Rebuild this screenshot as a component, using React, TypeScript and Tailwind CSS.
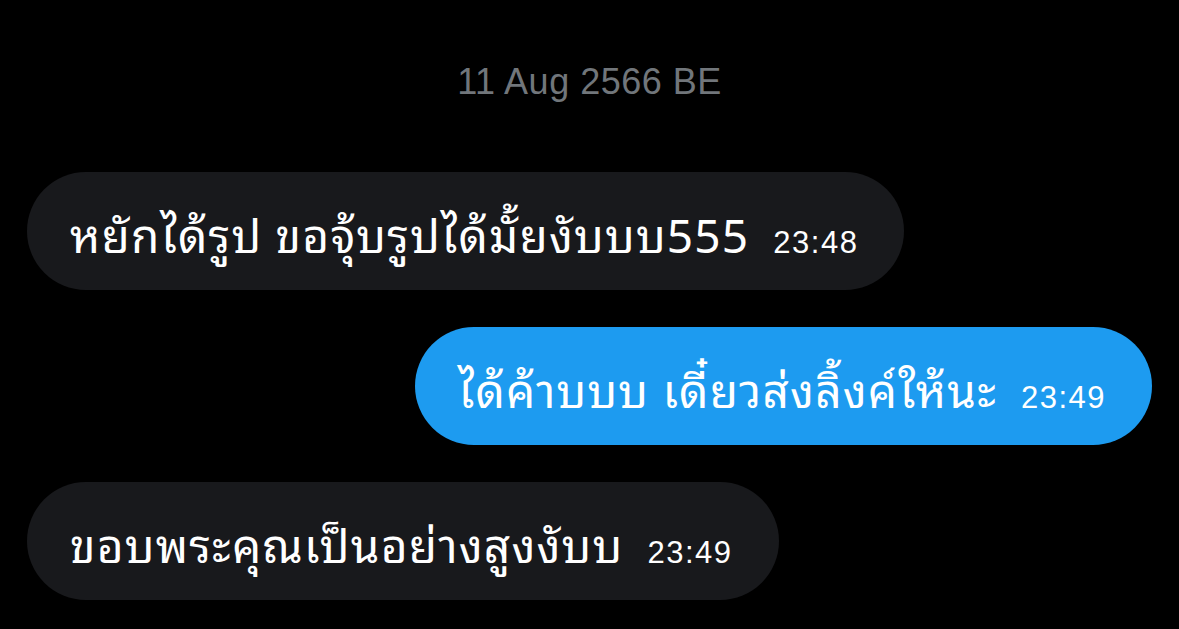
import React from 'react';

type Msg = { text: string; time: string; mine?: boolean };

const messages: Msg[] = [
  { text: 'หยักได้รูป ขอจุ้บรูปได้มั้ยงับบบ555', time: '23:48' },
  { text: 'ได้ค้าบบบ เดี๋ยวส่งลิ้งค์ให้นะ', time: '23:49', mine: true },
  { text: 'ขอบพระคุณเป็นอย่างสูงงับบ', time: '23:49' },
];

const Bubble: React.FC<{ msg: Msg }> = ({ msg }) => (
  <div className={`flex ${msg.mine ? 'justify-end' : 'justify-start'}`}>
    <div
      className={`h-[118px] rounded-full pl-[43px] pr-[46px] flex items-baseline pt-[32px] text-white ${
        msg.mine ? 'bg-[#1d9bf0]' : 'bg-[#18191c]'
      }`}
    >
      <span className="text-[46px] leading-[56px] tracking-[1.2px]">{msg.text}</span>
      <span className="text-[31px] ml-[24px] tracking-[1.5px] font-['Liberation_Sans',sans-serif]">{msg.time}</span>
    </div>
  </div>
);

export default function App() {
  return (
    <div className="min-h-screen w-full bg-black font-['Noto_Sans_Thai_Looped','Tlwg_Typo','Loma','Noto_Sans','Noto_Sans_Thai',sans-serif] px-[27px] pt-[56px]">
      <div className="text-center text-[36px] text-[#71767b] tracking-[0.5px] font-['Liberation_Sans',sans-serif] leading-[52px]">
        11 Aug 2566 BE
      </div>
      <div className="mt-[64px] flex flex-col gap-[37px]">
        {messages.map((m, i) => (
          <Bubble key={i} msg={m} />
        ))}
      </div>
    </div>
  );
}
